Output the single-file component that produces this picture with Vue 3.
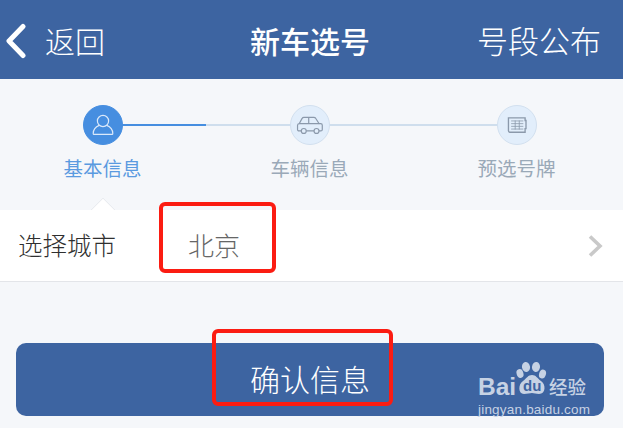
<template>
  <div class="page">
    <header class="top-bar">
      <div class="back">
        <svg class="back-icon" width="22" height="36" viewBox="0 0 22 36">
          <path d="M19 3.5 L5 18 L19 32.5" fill="none" stroke="#fff" stroke-width="5" stroke-linecap="round" stroke-linejoin="round" />
        </svg>
        <span>返回</span>
      </div>
      <h1 class="title">新车选号</h1>
      <span class="top-link">号段公布</span>
    </header>

    <section class="steps">
      <div class="step-line"><i class="line-done"></i></div>
      <div v-for="step in steps" :key="step.label" class="step" :class="{ active: step.active }">
        <div class="step-circle">
          <svg v-if="step.icon === 'user'" width="24" height="24" viewBox="0 0 24 24" fill="none" stroke="#dbe9fa" stroke-width="1.2">
            <circle cx="12" cy="8" r="5.6" />
            <path d="M8.2 12.4 C4.5 14 2.3 17 2.2 20.4 C2.2 21 2.5 21.3 3 21.3 H21 C21.5 21.3 21.8 21 21.8 20.4 C21.7 17 19.5 14 15.8 12.4" />
          </svg>
          <svg v-else-if="step.icon === 'car'" width="28" height="22" viewBox="0 0 30 24" fill="none" stroke="#8b99ab" stroke-width="1.3">
            <path d="M5.5 18.5 H3.2 C2 18.5 1.4 17.8 1.4 16.8 V12.6 C1.4 11.4 2.1 10.7 3.2 10.6 L6.4 4.8 C6.8 4 7.5 3.6 8.4 3.6 H19.2 C20 3.6 20.6 3.9 21.1 4.6 L25 10.6 H26.6 C27.7 10.6 28.4 11.3 28.4 12.4 V16.8 C28.4 17.8 27.8 18.5 26.8 18.5 H24.8" />
            <path d="M11 18.5 H19.4 M3.4 10.6 H25 M13.6 3.8 V10.6" />
            <circle cx="8.2" cy="18.5" r="2.7" />
            <circle cx="22.1" cy="18.5" r="2.7" />
          </svg>
          <svg v-else width="20" height="18" viewBox="0 0 22 20" fill="none" stroke="#8b99ab" stroke-width="1.1">
            <path d="M1.5 2 H20 V5 H21 V14 H20 V18 H3 C2 18 1.5 17.5 1.5 16.5 Z" stroke-width="1.5" />
            <path d="M4.5 5.5 H18 M4.5 8.5 H18 M4.5 11.5 H18 M4.5 14.5 H18 M9 5 V15 M13.5 5 V15" stroke-width="0.9" />
          </svg>
        </div>
        <span class="step-label">{{ step.label }}</span>
      </div>
    </section>

    <div class="row-wrap">
      <span class="pointer"></span>
      <div class="row">
        <span class="row-label">选择城市</span>
        <span class="row-value">北京</span>
        <svg class="chevron" width="16" height="24" viewBox="0 0 16 24">
          <path d="M3 2.5 L13 12 L3 21.5" fill="none" stroke="#c9c9c9" stroke-width="3.6" />
        </svg>
      </div>
      <div class="mark mark-city"></div>
    </div>

    <div class="action">
      <button class="confirm">确认信息</button>
      <div class="mark mark-confirm"></div>
      <div class="watermark">
        <div class="wm-top">
          <span class="wm-bai">Bai</span>
          <span class="wm-paw">
            <svg width="33" height="34" viewBox="0 0 33 34" fill="#c6d2e4">
              <ellipse cx="5" cy="11.5" rx="3.4" ry="4.4" transform="rotate(-18 5 11.5)" />
              <ellipse cx="11" cy="5" rx="4" ry="5" transform="rotate(-10 11 5)" />
              <ellipse cx="21" cy="5" rx="4" ry="5" transform="rotate(8 21 5)" />
              <ellipse cx="27.5" cy="12" rx="3.4" ry="4.6" transform="rotate(18 27.5 12)" />
              <path d="M17 13 C21 13 22 16 26 19 C31 22 31 32 24 32 C21 32 19 31 17 31 C15 31 12 32 9 32 C3 32 3 22 8 19 C12 16 13 13 17 13 Z" />
            </svg>
            <em>du</em>
          </span>
          <span class="wm-cn">经验</span>
        </div>
        <div class="wm-url">jingyan.baidu.com</div>
      </div>
    </div>
  </div>
</template>

<script setup>
const steps = [
  { label: '基本信息', icon: 'user', active: true },
  { label: '车辆信息', icon: 'car', active: false },
  { label: '预选号牌', icon: 'plate', active: false }
]
</script>

<style>
html,
body {
  margin: 0;
  background: #f5f7fa;
}
</style>

<style scoped>
.page {
  width: 623px;
  height: 428px;
  overflow: hidden;
  background: #f5f7fa;
  font-family: "Noto Sans CJK SC", "Liberation Sans", sans-serif;
}

.top-bar {
  height: 79px;
  background: #3d64a1;
  color: #fff;
  display: grid;
  grid-template-columns: 1fr auto 1fr;
  align-items: center;
  padding: 0 22px 0 4px;
  box-sizing: border-box;
}

.back {
  display: flex;
  align-items: center;
  gap: 19px;
  font-size: 30px;
  font-weight: 300;
}

.back-icon {
  margin-top: 2px;
}

.title {
  margin: 0;
  font-size: 30px;
  font-weight: 500;
  padding-left: 15px;
}

.top-link {
  justify-self: end;
  font-size: 31px;
  font-weight: 300;
}

.steps {
  position: relative;
  height: 131px;
  display: grid;
  grid-template-columns: repeat(3, 207px);
  box-sizing: border-box;
  padding-top: 26px;
  margin-left: -1px;
}

.step-line {
  position: absolute;
  left: 103px;
  top: 45px;
  width: 414px;
  height: 2px;
  background: #cfdeed;
}

.line-done {
  display: block;
  width: 104px;
  height: 2px;
  background: #468ee0;
}

.step {
  position: relative;
  display: flex;
  flex-direction: column;
  align-items: center;
}

.step-circle {
  width: 40px;
  height: 40px;
  box-sizing: border-box;
  border-radius: 50%;
  background: #e2eefb;
  border: 1px solid #d2e0ef;
  display: flex;
  align-items: center;
  justify-content: center;
}

.step.active .step-circle {
  background: #468ee0;
  border-color: #468ee0;
}

.step-label {
  margin-top: 8px;
  font-size: 19.5px;
  line-height: 30px;
  color: #9aa9b8;
}

.step.active .step-label {
  color: #5a9ae0;
}

.row-wrap {
  position: relative;
}

.pointer {
  position: absolute;
  left: 94px;
  top: -9px;
  width: 18px;
  height: 18px;
  box-sizing: border-box;
  background: #fff;
  border-left: 1px solid #e6e9ee;
  border-top: 1px solid #e6e9ee;
  transform: rotate(45deg);
  clip-path: polygon(0 0, 100% 0, 0 100%);
}

.row {
  height: 72px;
  box-sizing: border-box;
  background: #fff;
  border-bottom: 1px solid #e3e5e9;
  display: flex;
  align-items: center;
  padding: 0 20px 0 18px;
}

.row-label {
  width: 170px;
  font-size: 24.5px;
  font-weight: 300;
  color: #2f2f2f;
  margin-top: -2px;
}

.row-value {
  flex: 1;
  font-size: 26px;
  font-weight: 300;
  color: #666;
  margin-top: -2px;
}

.mark {
  position: absolute;
  box-sizing: border-box;
  border: 4px solid #fb1c12;
  border-radius: 6px;
}

.mark-city {
  left: 159px;
  top: -8px;
  width: 117px;
  height: 71px;
}

.action {
  position: relative;
  padding: 61px 19px 0 16px;
}

.confirm {
  display: block;
  width: 100%;
  height: 73px;
  border: none;
  border-radius: 10px;
  background: #3d64a1;
  color: #fff;
  font-family: inherit;
  font-size: 30px;
  font-weight: 300;
  padding: 0 0 4px;
}

.mark-confirm {
  left: 212px;
  top: 47px;
  width: 181px;
  height: 77px;
}

.watermark {
  position: absolute;
  left: 478px;
  top: 80px;
  width: 120px;
  color: #c6d2e4;
}

.wm-top {
  display: flex;
  align-items: flex-end;
  height: 34px;
  font-family: "Liberation Sans", sans-serif;
  white-space: nowrap;
}

.wm-bai {
  flex: none;
  width: 37px;
  font-size: 24.5px;
  line-height: 18px;
  font-weight: 700;
}

.wm-paw {
  position: relative;
  flex: none;
  width: 33px;
  height: 34px;
}

.wm-paw svg {
  display: block;
}

.wm-paw em {
  position: absolute;
  left: 8px;
  bottom: 3px;
  font-size: 15px;
  font-style: normal;
  font-weight: 700;
  line-height: 15px;
  color: #3d64a1;
}

.wm-cn {
  flex: none;
  font-family: "Noto Sans CJK SC", sans-serif;
  font-size: 18.5px;
  line-height: 20px;
  font-weight: 500;
  margin-left: 1px;
}

.wm-url {
  margin-top: 6px;
  font-family: "Liberation Sans", sans-serif;
  font-size: 13.5px;
  line-height: 15px;
  letter-spacing: 0.2px;
  white-space: nowrap;
}
</style>
